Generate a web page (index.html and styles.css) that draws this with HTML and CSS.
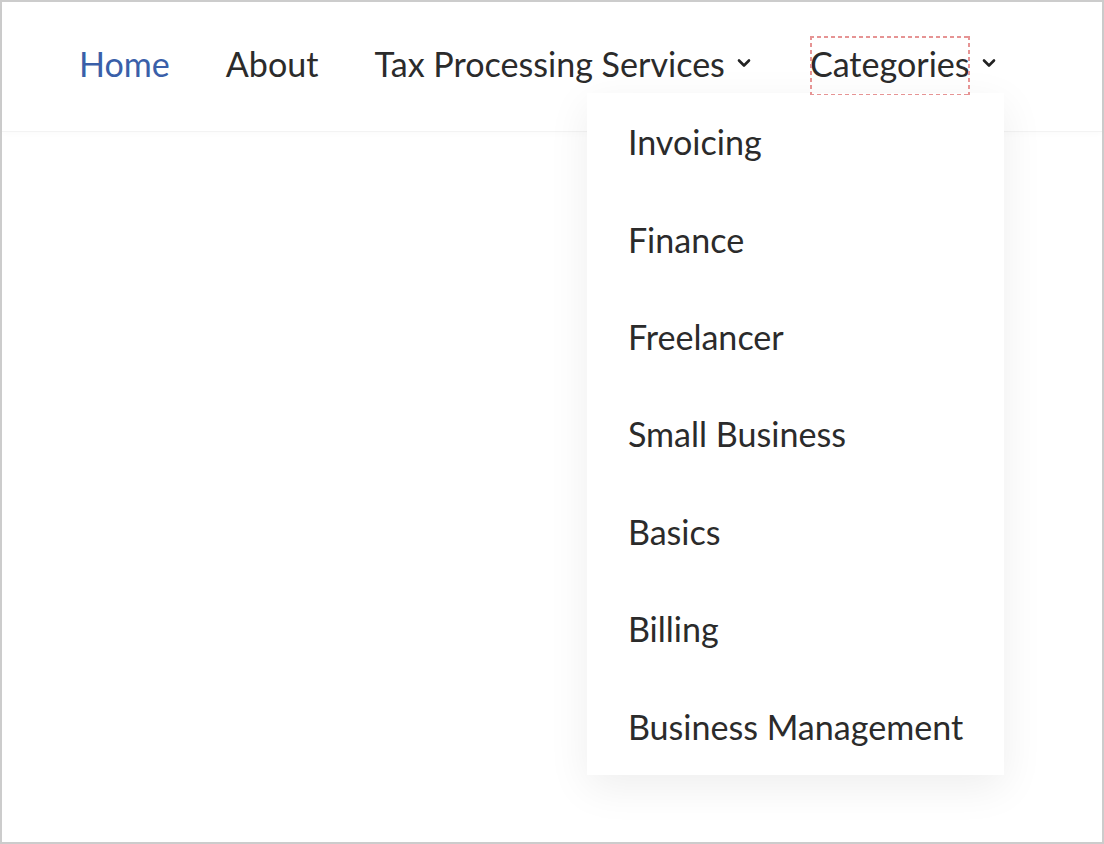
FILE: index.html
```html
<!DOCTYPE html>
<html lang="en">
<head>
<meta charset="utf-8">
<title>Navigation</title>
<link rel="stylesheet" href="styles.css">
</head>
<body>
<div class="frame">
  <header class="header">
    <nav class="nav">
      <ul class="menu">
        <li class="menu-item"><a class="menu-link active" href="#">Home</a></li>
        <li class="menu-item"><a class="menu-link" href="#">About</a></li>
        <li class="menu-item">
          <a class="menu-link" href="#">Tax Processing Services</a>
          <svg class="chevron" viewBox="0 0 14 10" width="14" height="10"><polyline points="2,2.5 7,7.5 12,2.5" fill="none" stroke="#222" stroke-width="2.6" stroke-linecap="round" stroke-linejoin="round"/></svg>
        </li>
        <li class="menu-item has-dropdown">
          <a class="menu-link focused" href="#">Categories</a>
          <svg class="chevron" viewBox="0 0 14 10" width="14" height="10"><polyline points="2,2.5 7,7.5 12,2.5" fill="none" stroke="#222" stroke-width="2.6" stroke-linecap="round" stroke-linejoin="round"/></svg>
          <ul class="dropdown">
            <li><a class="dropdown-link" href="#">Invoicing</a></li>
            <li><a class="dropdown-link" href="#">Finance</a></li>
            <li><a class="dropdown-link" href="#">Freelancer</a></li>
            <li><a class="dropdown-link" href="#">Small Business</a></li>
            <li><a class="dropdown-link" href="#">Basics</a></li>
            <li><a class="dropdown-link" href="#">Billing</a></li>
            <li><a class="dropdown-link" href="#">Business Management</a></li>
          </ul>
        </li>
      </ul>
    </nav>
  </header>
</div>
</body>
</html>
```

FILE: styles.css
```css
* { box-sizing: border-box; }
html, body { margin: 0; padding: 0; height: 100%; }
body {
  font-family: Lato, "Open Sans", sans-serif;
  color: #2b2b2b;
  background: #fff;
}
.frame {
  height: 100vh;
  border: 2px solid #cccccc;
  background: #fff;
}
.header {
  height: 129px;
  display: flex;
  align-items: flex-start;
  padding: 34px 0 0 77px;
  background: #fff;
  box-shadow: 0 1px 0 #f3f3f3, 0 3px 6px rgba(0,0,0,0.02);
  position: relative;
}
.menu {
  list-style: none;
  margin: 0;
  padding: 0;
  display: flex;
  align-items: flex-start;
  gap: 56px;
}
.menu-item {
  position: relative;
  display: flex;
  align-items: flex-start;
  gap: 12px;
}
.menu-link {
  display: block;
  font-size: 34.1px;
  line-height: 55px;
  height: 59px;
  color: #2b2b2b;
  text-decoration: none;
}
.menu-link.active { color: #3a5fa9; }
.menu-link.focused {
  position: relative;
  z-index: 3;
}
.menu-link.focused::after {
  content: "";
  position: absolute;
  inset: 0;
  pointer-events: none;
  background:
    linear-gradient(90deg, #e69494 62%, transparent 0) top left / 7px 1.5px repeat-x,
    linear-gradient(90deg, #e69494 62%, transparent 0) bottom left / 7px 1.5px repeat-x,
    linear-gradient(180deg, #e69494 62%, transparent 0) top left / 1.5px 7px repeat-y,
    linear-gradient(180deg, #e69494 62%, transparent 0) top right / 1.5px 7px repeat-y;
}
.chevron {
  display: block;
  margin-top: 22px;
  margin-right: 3px;
}
.dropdown {
  position: absolute;
  top: 57px;
  left: -223px;
  width: 417px;
  margin: 0;
  padding: 0;
  list-style: none;
  background: #fff;
  box-shadow: 0 12px 40px rgba(0,0,0,0.07);
  z-index: 2;
}
.dropdown-link {
  display: flex;
  align-items: center;
  height: 97.4px;
  padding-left: 41px;
  font-size: 34.1px;
  color: #2b2b2b;
  text-decoration: none;
}
```
